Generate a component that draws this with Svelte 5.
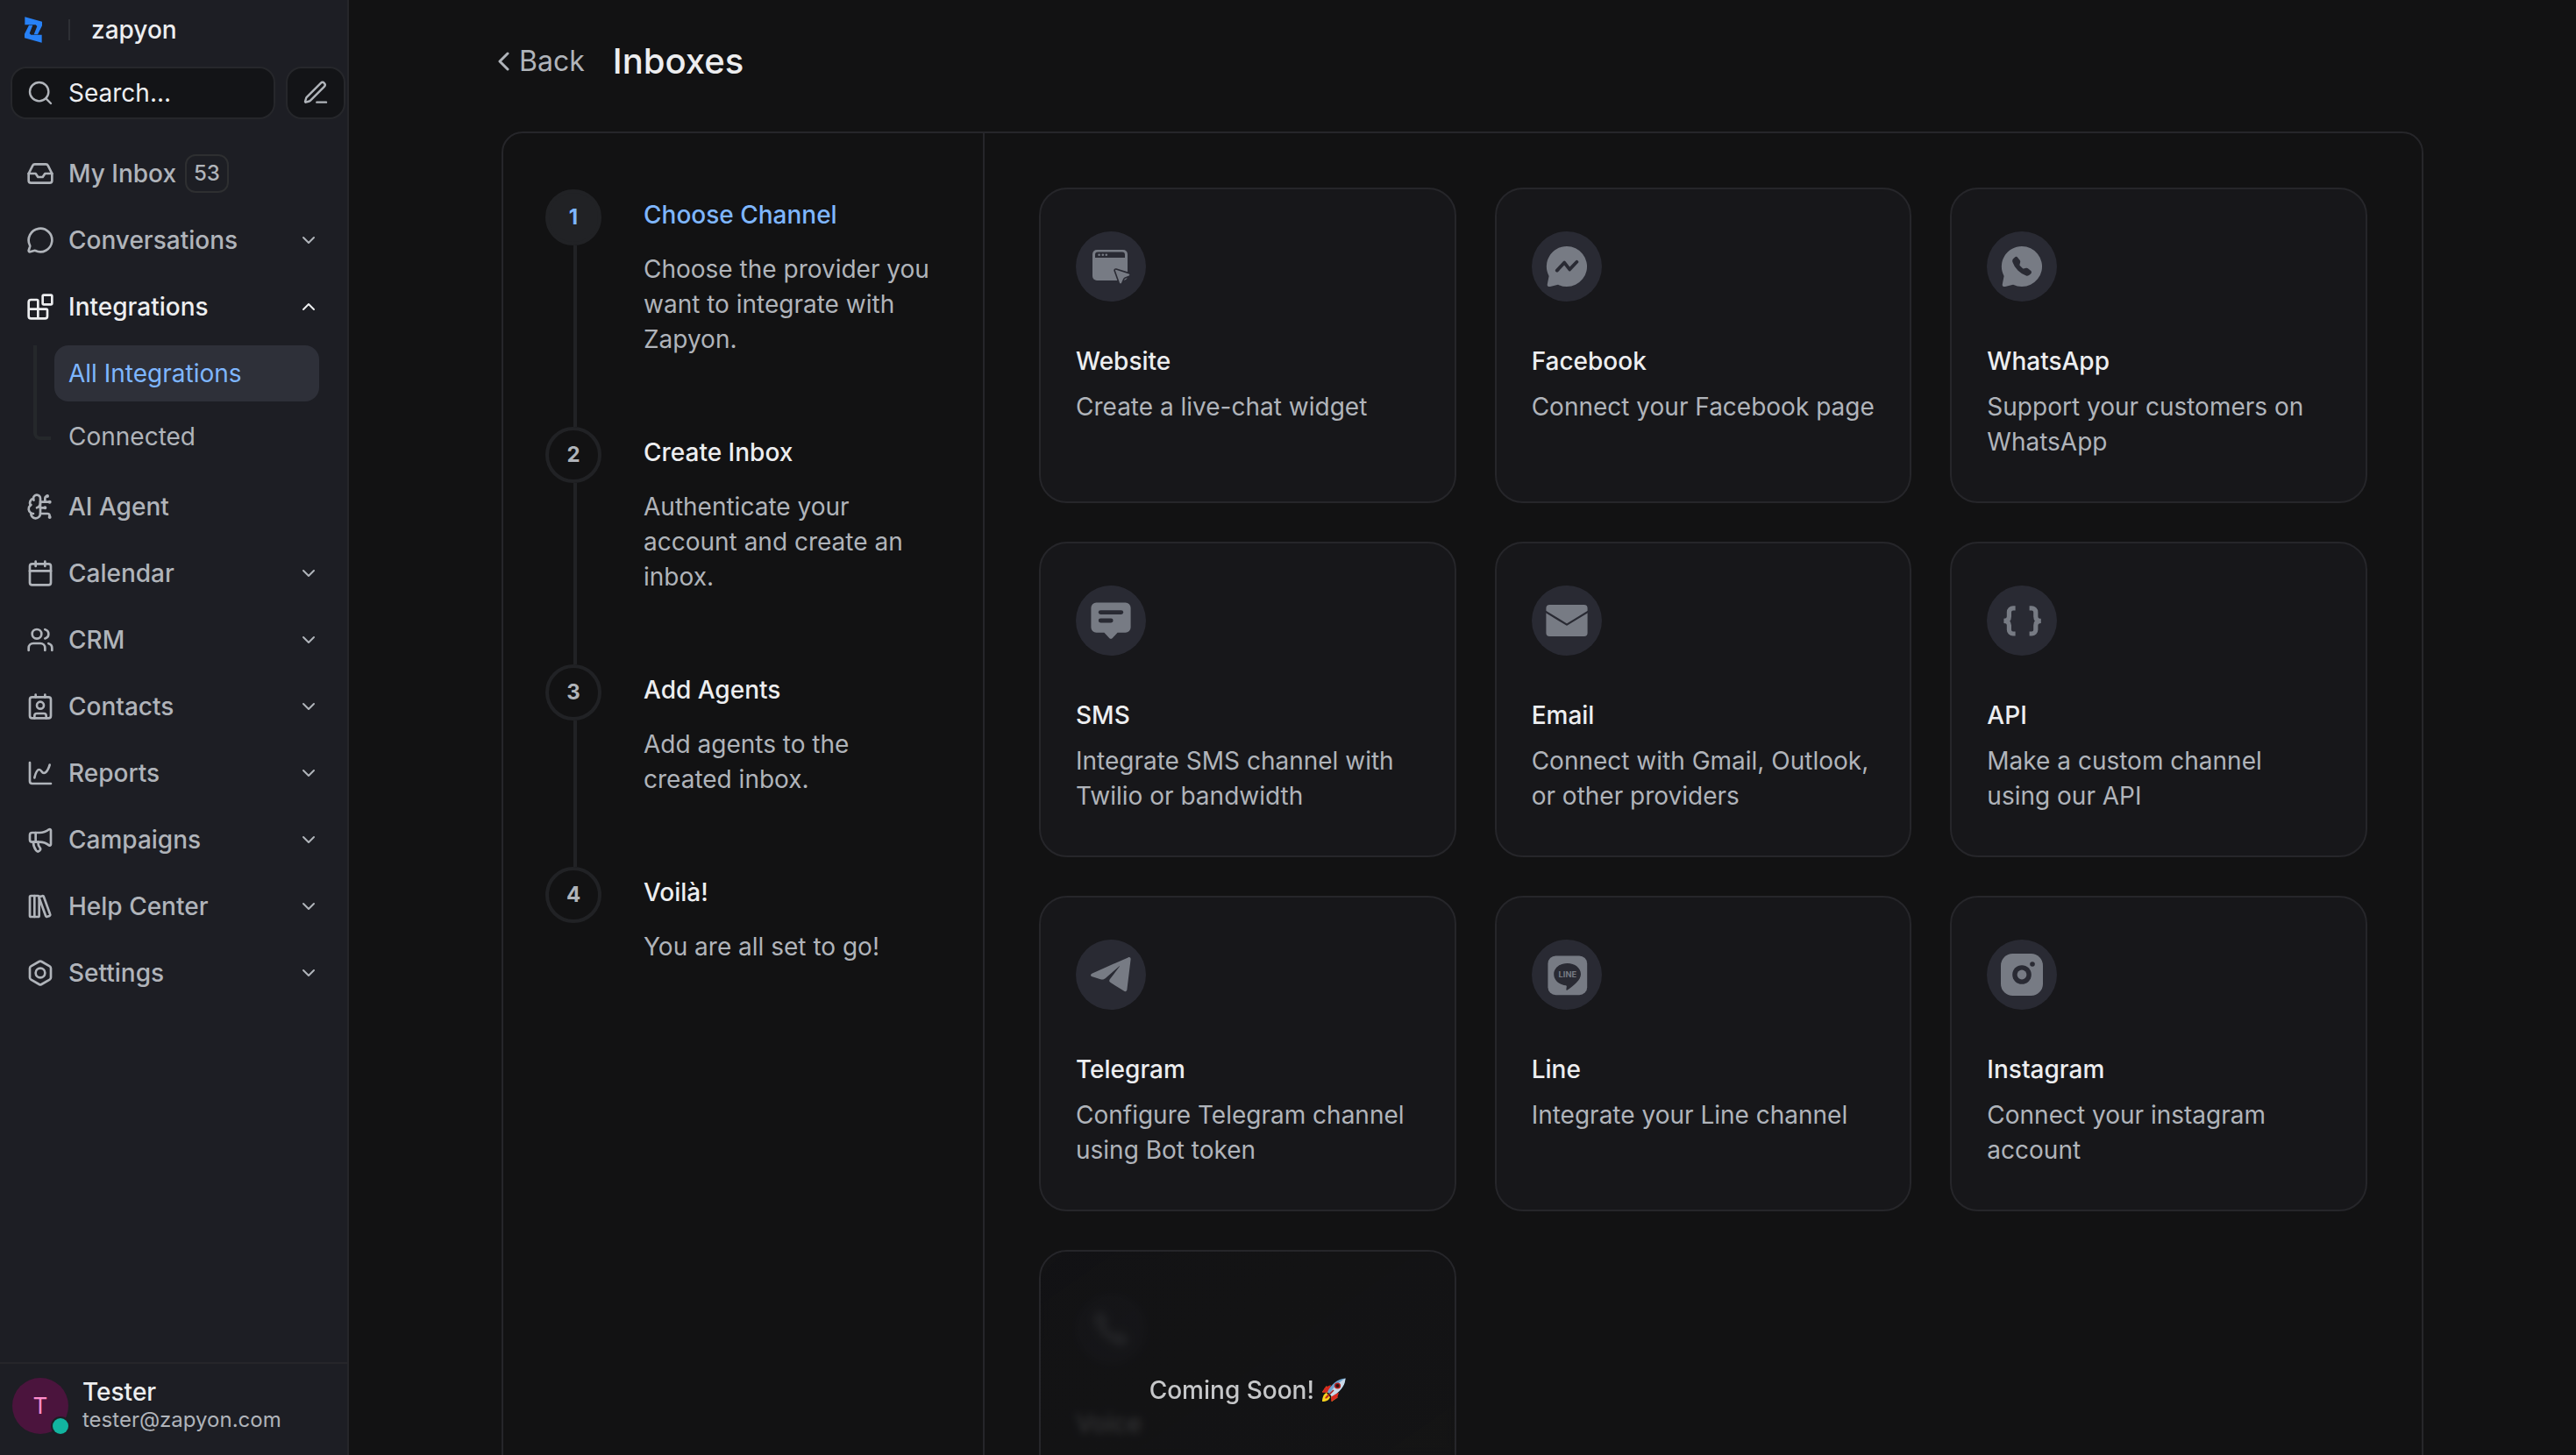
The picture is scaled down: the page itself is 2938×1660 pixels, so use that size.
<script>
  const navTop = [
    { label: 'My Inbox', icon: 'inbox', badge: 53 },
    { label: 'Conversations', icon: 'chat', chevron: 'down' },
    {
      label: 'Integrations',
      icon: 'blocks',
      chevron: 'up',
      active: true,
      children: [{ label: 'All Integrations', active: true }, { label: 'Connected' }],
    },
    { label: 'AI Agent', icon: 'brain' },
    { label: 'Calendar', icon: 'calendar', chevron: 'down' },
    { label: 'CRM', icon: 'users', chevron: 'down' },
    { label: 'Contacts', icon: 'contact', chevron: 'down' },
    { label: 'Reports', icon: 'chart', chevron: 'down' },
    { label: 'Campaigns', icon: 'megaphone', chevron: 'down' },
    { label: 'Help Center', icon: 'library', chevron: 'down' },
    { label: 'Settings', icon: 'bolt', chevron: 'down' },
  ];

  const strokes = {
    inbox: [
      'M22 12h-6l-2 3h-4l-2-3H2',
      'M5.45 5.11 2 12v6a2 2 0 0 0 2 2h16a2 2 0 0 0 2-2v-6l-3.45-6.89A2 2 0 0 0 16.76 4H7.24a2 2 0 0 0-1.79 1.11z',
    ],
    chat: [
      'M2.992 16.342a2 2 0 0 1 .094 1.167l-1.065 3.29a1 1 0 0 0 1.236 1.168l3.413-.998a2 2 0 0 1 1.099.092 10 10 0 1 0-4.777-4.719',
    ],
    blocks: [
      'M10 22V7a1 1 0 0 0-1-1H4a2 2 0 0 0-2 2v12a2 2 0 0 0 2 2h12a2 2 0 0 0 2-2v-5a1 1 0 0 0-1-1H2',
      'M15 2h6a1 1 0 0 1 1 1v6a1 1 0 0 1-1 1h-6a1 1 0 0 1-1-1V3a1 1 0 0 1 1-1z',
    ],
    brain: [
      'M12 5a3 3 0 1 0-5.997.125 4 4 0 0 0-2.526 5.77 4 4 0 0 0 .556 6.588A4 4 0 1 0 12 18Z',
      'M9 13a4.5 4.5 0 0 0 3-4',
      'M6.003 5.125A3 3 0 0 0 6.401 6.5',
      'M3.477 10.896a4 4 0 0 1 .585-.396',
      'M6 18a4 4 0 0 1-1.967-.516',
      'M12 13h4',
      'M12 18h6a2 2 0 0 1 2 2v1',
      'M12 8h8',
      'M16 8V5a2 2 0 0 1 2-2',
      'M15.5 13a.5.5 0 1 0 1 0 .5.5 0 1 0-1 0',
      'M17.5 3a.5.5 0 1 0 1 0 .5.5 0 1 0-1 0',
      'M19.5 21a.5.5 0 1 0 1 0 .5.5 0 1 0-1 0',
      'M19.5 8a.5.5 0 1 0 1 0 .5.5 0 1 0-1 0',
    ],
    calendar: ['M8 2v4', 'M16 2v4', 'M5 4h14a2 2 0 0 1 2 2v14a2 2 0 0 1-2 2H5a2 2 0 0 1-2-2V6a2 2 0 0 1 2-2z', 'M3 10h18'],
    users: [
      'M16 21v-2a4 4 0 0 0-4-4H6a4 4 0 0 0-4 4v2',
      'M5 7a4 4 0 1 0 8 0 4 4 0 1 0-8 0',
      'M22 21v-2a4 4 0 0 0-3-3.87',
      'M16 3.13a4 4 0 0 1 0 7.75',
    ],
    contact: [
      'M16 2v2',
      'M8 2v2',
      'M7 22v-2a2 2 0 0 1 2-2h6a2 2 0 0 1 2 2v2',
      'M9 11a3 3 0 1 0 6 0 3 3 0 1 0-6 0',
      'M5 4h14a2 2 0 0 1 2 2v14a2 2 0 0 1-2 2H5a2 2 0 0 1-2-2V6a2 2 0 0 1 2-2z',
    ],
    chart: ['M3 3v16a2 2 0 0 0 2 2h16', 'M7 16c.5-2 1.5-7 4-7 2 0 2 3 4 3 2.5 0 4.5-5 5-7'],
    megaphone: [
      'M11 6a13 13 0 0 0 8.4-2.8A1 1 0 0 1 21 4v12a1 1 0 0 1-1.6.8A13 13 0 0 0 11 14H5a2 2 0 0 1-2-2V8a2 2 0 0 1 2-2z',
      'M6 14a12 12 0 0 0 2.4 7.2 2 2 0 0 0 3.2-2.4A8 8 0 0 1 10 14',
      'M8 6v8',
    ],
    library: [
      'M4 3h6a1 1 0 0 1 1 1v16a1 1 0 0 1-1 1H4a1 1 0 0 1-1-1V4a1 1 0 0 1 1-1z',
      'M7 3v18',
      'M20.4 18.9c.2.5-.1 1.1-.6 1.3l-1.9.7c-.5.2-1.1-.1-1.3-.6L11.1 5.1c-.2-.5.1-1.1.6-1.3l1.9-.7c.5-.2 1.1.1 1.3.6Z',
    ],
    bolt: [
      'M21 16V8a2 2 0 0 0-1-1.73l-7-4a2 2 0 0 0-2 0l-7 4A2 2 0 0 0 3 8v8a2 2 0 0 0 1 1.73l7 4a2 2 0 0 0 2 0l7-4A2 2 0 0 0 21 16z',
      'M8 12a4 4 0 1 0 8 0 4 4 0 1 0-8 0',
    ],
    search: ['m21 21-4.34-4.34', 'M3 11a8 8 0 1 0 16 0 8 8 0 1 0-16 0'],
    pen: [
      'M13 20h8',
      'M16.376 3.622a1 1 0 0 1 3.002 3.002L7.368 18.635a2 2 0 0 1-.855.506l-2.872.838a.5.5 0 0 1-.62-.62l.838-2.872a2 2 0 0 1 .506-.854z',
    ],
    down: ['m6 9 6 6 6-6'],
    up: ['m18 15-6-6-6 6'],
  };

  const steps = [
    { title: 'Choose Channel', body: 'Choose the provider you want to integrate with Zapyon.' },
    { title: 'Create Inbox', body: 'Authenticate your account and create an inbox.' },
    { title: 'Add Agents', body: 'Add agents to the created inbox.' },
    { title: 'Voilà!', body: 'You are all set to go!' },
  ];
  const currentStep = 0;

  const channels = [
    { title: 'Website', body: 'Create a live-chat widget', icon: 'website' },
    { title: 'Facebook', body: 'Connect your Facebook page', icon: 'messenger' },
    { title: 'WhatsApp', body: 'Support your customers on WhatsApp', icon: 'whatsapp' },
    { title: 'SMS', body: 'Integrate SMS channel with Twilio or bandwidth', icon: 'sms' },
    { title: 'Email', body: 'Connect with Gmail, Outlook, or other providers', icon: 'email' },
    { title: 'API', body: 'Make a custom channel using our API', icon: 'api' },
    { title: 'Telegram', body: 'Configure Telegram channel using Bot token', icon: 'telegram' },
    { title: 'Line', body: 'Integrate your Line channel', icon: 'line' },
    { title: 'Instagram', body: 'Connect your instagram account', icon: 'instagram' },
    { title: 'Voice', icon: 'voice', soon: true },
  ];

  const phone =
    'M1.885.511a1.745 1.745 0 0 1 2.61.163L6.29 2.98c.329.423.445.974.315 1.494l-.547 2.19a.68.68 0 0 0 .178.643l2.457 2.457a.68.68 0 0 0 .644.178l2.189-.547a1.75 1.75 0 0 1 1.494.315l2.306 1.794c.829.645.905 1.87.163 2.611l-1.034 1.034c-.74.74-1.846 1.065-2.877.702a18.6 18.6 0 0 1-7.01-4.42 18.6 18.6 0 0 1-4.42-7.009c-.362-1.03-.037-2.137.703-2.877z';
  const bubble =
    'M12 .5a11.500 11.500 0 1 1-5 21.850l-4.500 1.100c-1 .25-1.800-.2-1.600-1.300l.9-4.700A11.500 11.500 0 0 1 12 .5z';
</script>

{#snippet stroke(name)}
  <svg class="icon icon-{name}" viewBox="0 0 24 24" aria-hidden="true">
    {#each strokes[name] as d}<path {d} />{/each}
  </svg>
{/snippet}

{#snippet glyph(name)}
  <svg class="glyph" viewBox="0 0 24 24" aria-hidden="true">
    {#if name === 'website'}
      <rect x="1.500" y="2.500" width="20" height="17.500" rx="2.500" />
      <path class="cut" d="M3 7V5.400A1.600 1.600 0 0 1 4.600 3.800h13.800A1.600 1.600 0 0 1 20 5.400V7z" />
      <circle cx="5.300" cy="5.400" r=".65" /><circle cx="7.400" cy="5.400" r=".65" /><circle cx="9.400" cy="5.400" r=".65" />
      <path class="outlined" d="M14.900 13.900l7.300 2.300c.6.200.6.800.1 1l-2.500 1.100c-.4.200-.6.400-.8.800l-1 2.300c-.2.500-.8.500-1 0l-2.500-7c-.1-.3.100-.6.400-.5z" />
    {:else if name === 'messenger'}
      <path d={bubble} />
      <path class="cut-line" d="m6.400 14.300 4.200-4.500 3 3.900 4.100-4.300" />
    {:else if name === 'whatsapp'}
      <path d={bubble} />
      <path class="cut" transform="translate(6.600 6.500) scale(.68)" d={phone} />
    {:else if name === 'sms'}
      <path d="M3.700 1.700h16.600a3 3 0 0 1 3 3v11.200a3 3 0 0 1-3 3h-4.500l-2.900 3.100a1.300 1.300 0 0 1-1.800 0l-2.900-3.100H3.700a3 3 0 0 1-3-3V4.700a3 3 0 0 1 3-3z" />
      <rect class="cut" x="4.900" y="6.100" width="14.200" height="2.400" rx="1.200" />
      <rect class="cut" x="4.900" y="10.800" width="8.400" height="2.400" rx="1.200" />
    {:else if name === 'email'}
      <rect x=".2" y="3" width="23.600" height="18" rx="2" />
      <path class="cut-line thin" d="M0 7l12 7.300L24 7" />
    {:else if name === 'api'}
      <path class="line" d="M8.300 4.900H7a2.300 2.300 0 0 0-2.300 2.300v2.400c0 1.500-.9 2.600-3 2.600 2.100 0 3 1.100 3 2.600v2.400A2.300 2.300 0 0 0 7 19.500h1.300" />
      <path class="line" d="M16.300 4.900h1.300a2.300 2.300 0 0 1 2.300 2.300v2.400c0 1.500.9 2.600 3 2.600-2.100 0-3 1.100-3 2.600v2.400a2.300 2.300 0 0 1-2.300 2.300h-1.300" />
    {:else if name === 'telegram'}
      <path d="M21.800 2.200c.9-.4 1.600.1 1.500 1.100l-2.100 17.200c-.1 1-1 1.400-1.800.8l-7-4.400c-1.500-.9-1.700-1.400-.7-2.600l5.200-6.900c.2-.3 0-.4-.2-.2l-7.600 6.700c-1 .9-1.900 1.100-3 .7l-4.700-1.500c-1.200-.4-1.200-1.400 0-1.900z" />
    {:else if name === 'line'}
      <rect x="1.200" y="1.200" width="22.400" height="22.400" rx="4.500" />
      <path class="cut" d="M12.300 5.500c4.300 0 7.700 2.700 7.700 6.200 0 3.100-3.700 6.300-7.700 9-.5.300-.7.100-.6-.4l.2-1.500c0-.4-.1-.6-.5-.7-3.900-.5-6.800-3.100-6.800-6.400 0-3.500 3.400-6.200 7.700-6.200z" />
      <text x="12.400" y="13.600" text-anchor="middle">LINE</text>
    {:else if name === 'instagram'}
      <rect width="24" height="24" rx="6.800" />
      <circle class="cut" cx="12" cy="12" r="5.400" />
      <circle cx="12" cy="12" r="2.700" />
      <circle class="cut" cx="18" cy="6" r="1.400" />
    {:else if name === 'voice'}
      <path transform="translate(2 2) scale(1.250)" d={phone} />
    {/if}
  </svg>
{/snippet}

<div class="app">
  <aside class="sidebar">
    <div class="brand">
      <svg class="logo" viewBox="0 0 60 90" aria-hidden="true">
        <path d="M1 1 60 17V31L45 61H32L43 33 38 28H1z" />
        <path d="M59 89 0 73V59L15 29H28L17 57 22 62H59z" />
      </svg>
      <span class="rule"></span>
      <span class="account">zapyon</span>
    </div>

    <div class="tools">
      <label class="search">
        {@render stroke('search')}
        <input type="text" placeholder="Search..." aria-label="Search" />
      </label>
      <button class="compose" aria-label="Compose">{@render stroke('pen')}</button>
    </div>

    <nav>
      {#each navTop as item}
        <a class="item" class:active={item.active} href="#{item.icon}">
          {@render stroke(item.icon)}
          <span>{item.label}</span>
          {#if item.badge}<span class="badge">{item.badge}</span>{/if}
          {#if item.chevron}{@render stroke(item.chevron)}{/if}
        </a>
        {#if item.children}
          <div class="sub">
            <div class="branch"></div>
            <div class="sub-list">
              {#each item.children as child}
                <a class="sub-item" class:selected={child.active} href="#{item.icon}">{child.label}</a>
              {/each}
            </div>
          </div>
        {/if}
      {/each}
    </nav>

    <button class="profile">
      <span class="avatar">T<span class="status"></span></span>
      <span class="who">
        <span class="name">Tester</span>
        <span class="mail">tester@zapyon.com</span>
      </span>
    </button>
  </aside>

  <main>
    <div class="content">
      <header>
        <button class="back">
          <svg viewBox="0 0 16 24" aria-hidden="true"><path d="m11 3-9 9 9 9" /></svg>
          Back
        </button>
        <h1>Inboxes</h1>
      </header>

      <div class="panel">
        <ol class="steps">
          {#each steps as step, i}
            <li class:current={i === currentStep}>
              <div class="marker">
                <span class="number">{i + 1}</span>
                {#if i < steps.length - 1}<span class="track"></span>{/if}
              </div>
              <div class="step-text">
                <h3>{step.title}</h3>
                <p>{step.body}</p>
              </div>
            </li>
          {/each}
        </ol>

        <div class="channels">
          {#each channels as channel}
            <button class="card" class:soon={channel.soon} disabled={channel.soon}>
              <span class="disc">{@render glyph(channel.icon)}</span>
              <span class="title">{channel.title}</span>
              {#if channel.body}<span class="desc">{channel.body}</span>{/if}
              {#if channel.soon}
                <span class="overlay">
                  Coming Soon!
                  <svg class="rocket" viewBox="0 0 28 28" role="img" aria-label="rocket">
                    <path fill="#f5a623" d="M6 9 1 16l7 1zM11 20l1 7 7-5z" />
                    <path fill="#d6281f" d="M11 8 4 11l-3 6 8-1zM12 19l-1 8 7-4 2-6z" />
                    <path fill="#f7d31e" d="M6 17c-3 1-5 5-5 10 5 0 8-2 9-5z" />
                    <path fill="#f08a1c" d="M7 19c-2 1-3 3-3 5 2 0 4-1 5-3z" />
                    <path fill="#6ea3cf" d="M27.500.5C18 1 11 8 7 16l5 5c8-4 15-11 15.500-20.500z" />
                    <path fill="#c9d8e6" d="M27.500.5C20 5 13 11 9.500 18.500L12 21c8-4 15-11 15.500-20.500z" />
                    <circle cx="18.500" cy="9" r="3.600" fill="#b3211d" />
                    <circle cx="18.500" cy="9" r="2.100" fill="#2a1216" />
                    <path stroke="#a81e1a" stroke-width="1.600" d="m5 23 9-9" />
                  </svg>
                </span>
              {/if}
            </button>
          {/each}
        </div>
      </div>
    </div>
  </main>
</div>

<style>
  :global(body) {
    background: #121213;
    overflow: hidden;
  }
  .app {
    display: flex;
    height: 100vh;
    font-family: Inter, 'Liberation Sans', sans-serif;
    font-size: 28px;
    line-height: 40px;
    color: #edeef0;
    background: #121213;
  }
  .app :is(button, input) {
    font: inherit;
    color: inherit;
    background: none;
    border: 0;
    padding: 0;
    text-align: left;
  }
  a {
    color: inherit;
    text-decoration: none;
  }
  h1, h3, p, ol {
    margin: 0;
    padding: 0;
    font-size: inherit;
    font-weight: inherit;
    list-style: none;
  }

  .icon {
    flex: none;
    width: 32px;
    height: 32px;
    fill: none;
    stroke: currentColor;
    stroke-width: 2;
    stroke-linecap: round;
    stroke-linejoin: round;
  }
  .icon-search, .icon-pen {
    stroke-width: 1.8;
  }
  .icon-down, .icon-up {
    width: 24px;
    height: 24px;
    margin-left: auto;
  }

  .sidebar {
    box-sizing: border-box;
    flex: none;
    width: 398px;
    display: flex;
    flex-direction: column;
    background: #1d1e24;
    border-right: 2px solid #26262a;
  }
  .brand {
    display: flex;
    align-items: center;
    padding: 14px 28px;
  }
  .logo {
    width: 20px;
    height: 30px;
    fill: #2781f6;
  }
  .rule {
    width: 2px;
    height: 24px;
    margin: 0 24px 0 30px;
    background: #2e3035;
  }
  .account, .name {
    font-weight: 500;
  }
  .tools {
    display: flex;
    gap: 12px;
    padding: 8px 2px 0 12px;
  }
  .app .search, .app .compose {
    box-sizing: border-box;
    display: flex;
    align-items: center;
    height: 60px;
    background: #131417;
    border: 2px solid #26272b;
    border-radius: 18px;
    color: #b0b4ba;
  }
  .app .search {
    flex: 1;
    min-width: 0;
    gap: 16px;
    padding: 0 16px;
  }
  .app .search input {
    min-width: 0;
    flex: 1;
    color: #edeef0;
    outline: 0;
  }
  .search input::placeholder {
    color: #edeef0;
    opacity: 1;
  }
  .app .compose {
    flex: none;
    justify-content: center;
    width: 68px;
  }
  nav {
    flex: 1;
    display: flex;
    flex-direction: column;
    gap: 12px;
    padding: 30px 16px 0 14px;
  }
  .item {
    display: flex;
    align-items: center;
    gap: 16px;
    height: 64px;
    padding: 0 16px;
    font-weight: 500;
    color: #b0b4ba;
  }
  .item.active {
    color: #edeef0;
  }
  .badge {
    box-sizing: border-box;
    height: 44px;
    padding: 0 8px;
    margin-left: -6px;
    font-size: 24px;
    border: 2px solid #2e2f31;
    border-radius: 12px;
  }
  .sub {
    display: flex;
    gap: 4px;
    padding: 0 16px 4px 24px;
  }
  .branch {
    box-sizing: border-box;
    width: 20px;
    height: 108px;
    border: solid #25282b;
    border-width: 0 0 4px 4px;
    border-radius: 0 0 0 8px;
  }
  .sub-list {
    flex: 1;
    display: flex;
    flex-direction: column;
    gap: 8px;
  }
  .sub-item {
    padding: 12px 16px;
    border-radius: 16px;
    color: #b0b4ba;
  }
  .sub-item.selected {
    background: #2e3039;
    color: #7eb6ff;
  }
  .app .profile {
    display: flex;
    align-items: center;
    gap: 16px;
    padding: 16px 14px 24px;
    border-top: 2px solid #26262a;
  }
  .avatar {
    position: relative;
    display: grid;
    place-items: center;
    width: 64px;
    height: 64px;
    border-radius: 50%;
    background: #4b143d;
    color: #ff8dcc;
    font-size: 26px;
  }
  .status {
    position: absolute;
    right: 0;
    bottom: 0;
    width: 18px;
    height: 18px;
    border-radius: 50%;
    background: #12b5a0;
    box-shadow: 0 0 0 2px #1d1e24;
  }
  .who {
    display: flex;
    flex-direction: column;
    line-height: 32px;
  }
  .mail {
    font-size: 24px;
    color: #b0b4ba;
  }

  main {
    flex: 1;
    min-width: 0;
    overflow: hidden;
  }
  .content {
    max-width: 2200px;
    margin: 0 auto;
  }
  header {
    display: flex;
    align-items: center;
    gap: 32px;
    padding: 46px 0 56px;
    line-height: 48px;
  }
  .app .back {
    display: flex;
    align-items: center;
    gap: 8px;
    font-size: 32px;
    color: #b0b4ba;
  }
  .back svg {
    width: 16px;
    height: 24px;
    fill: none;
    stroke: currentColor;
    stroke-width: 3;
    stroke-linecap: round;
    stroke-linejoin: round;
  }
  h1 {
    font-size: 40px;
    font-weight: 500;
  }
  .panel {
    display: grid;
    grid-template-columns: 1fr 3fr;
    margin: 0 4px;
    border: 2px solid #26262a;
    border-radius: 24px;
  }
  .steps {
    padding: 64px 48px;
  }
  .steps li {
    display: flex;
    gap: 48px;
  }
  .marker {
    flex: none;
    display: flex;
    flex-direction: column;
  }
  .number {
    box-sizing: border-box;
    display: grid;
    place-items: center;
    width: 64px;
    height: 64px;
    border: 4px solid #212225;
    border-radius: 50%;
    color: #b0b4ba;
    font-size: 24px;
    font-weight: 700;
  }
  .track {
    flex: 1;
    width: 4px;
    margin-left: 32px;
    background: #212225;
  }
  .step-text {
    display: flex;
    flex-direction: column;
    gap: 22px;
    padding: 9px 0 80px;
  }
  h3, .title {
    font-weight: 500;
  }
  p, .desc {
    color: #b0b4ba;
  }
  .current .number {
    background: #212225;
    color: #7eb6ff;
  }
  .current h3 {
    color: #7eb6ff;
  }

  .channels {
    display: grid;
    grid-template-columns: repeat(3, minmax(0, 1fr));
    align-items: start;
    gap: 44px;
    padding: 62px;
    border-left: 2px solid #26262a;
  }
  .app .card {
    position: relative;
    display: flex;
    flex-direction: column;
    box-sizing: border-box;
    align-self: stretch;
    min-height: 320px;
    padding: 48px 40px;
    border: 2px solid #26262a;
    border-radius: 32px;
    background: #17171a;
    overflow: hidden;
  }
  .disc {
    display: grid;
    place-items: center;
    width: 80px;
    height: 80px;
    margin-bottom: 48px;
    border-radius: 50%;
    background: #292a33;
  }
  .title {
    margin-bottom: 12px;
  }
  .glyph {
    width: 48px;
    height: 48px;
    fill: #777b84;
  }
  .glyph .cut {
    fill: #292a33;
  }
  .glyph .cut-line {
    fill: none;
    stroke: #292a33;
    stroke-width: 1.9;
    stroke-linecap: round;
    stroke-linejoin: round;
  }
  .glyph .thin {
    stroke-width: 1.1;
  }
  .glyph .line {
    fill: none;
    stroke: #777b84;
    stroke-width: 2.6;
  }
  .glyph .outlined {
    stroke: #292a33;
    stroke-width: 1.6;
    paint-order: stroke;
  }
  .glyph text {
    font-size: 4.6px;
    font-weight: 700;
  }
  .soon .title {
    color: #edeef0;
  }
  .overlay {
    position: absolute;
    inset: 0;
    display: flex;
    align-items: center;
    justify-content: center;
    gap: 8px;
    font-weight: 500;
    color: #c6c7c9;
    background: linear-gradient(145deg, #121214e0, #141414d0);
    backdrop-filter: blur(4px);
  }
  .rocket {
    width: 28px;
    height: 28px;
    fill: none;
  }
</style>
